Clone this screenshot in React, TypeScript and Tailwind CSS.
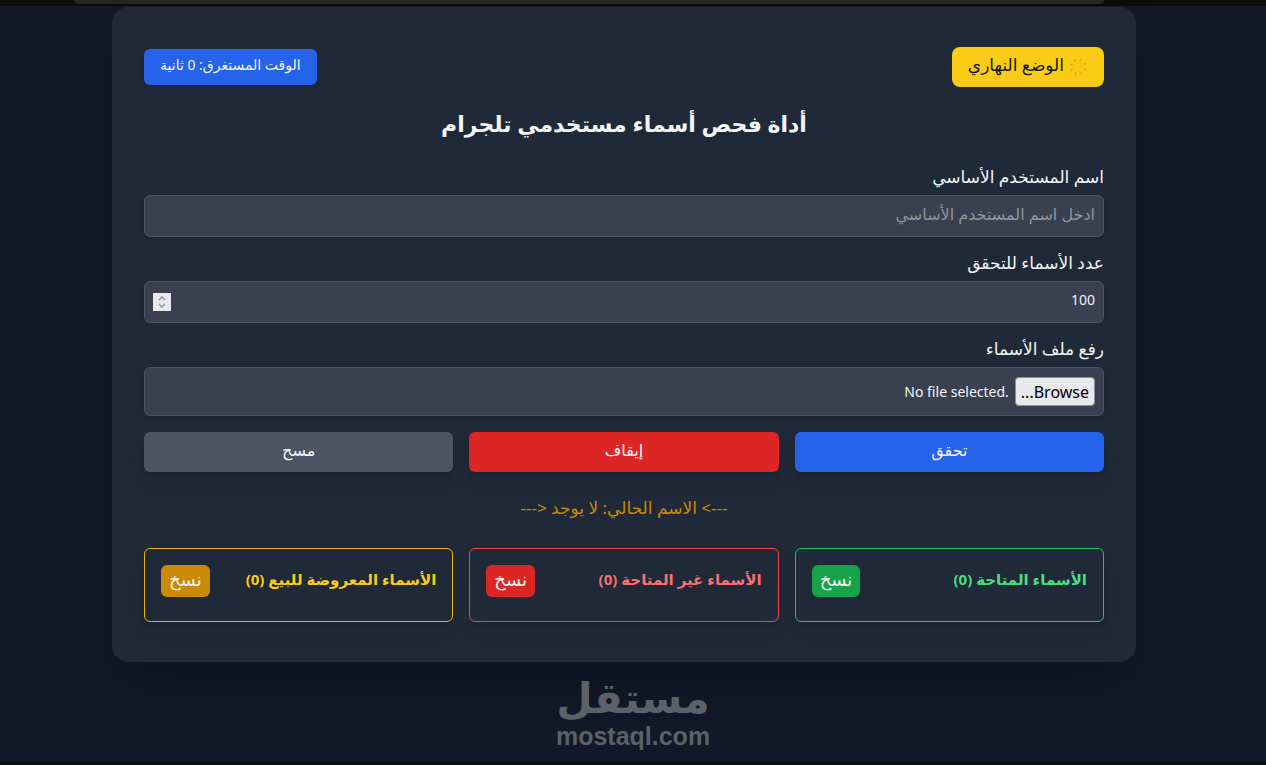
import { useState } from "react";

const resultLists = [
  {
    title: "الأسماء المتاحة",
    box: "border-[#22c55e]",
    heading: "text-[#4ade80]",
    button: "bg-[#16a34a]",
  },
  {
    title: "الأسماء غير المتاحة",
    box: "border-[#ef4444]",
    heading: "text-[#f87171]",
    button: "bg-[#dc2626]",
  },
  {
    title: "الأسماء المعروضة للبيع",
    box: "border-[#eab308]",
    heading: "text-[#facc15]",
    button: "bg-[#ca8a04]",
  },
];

const labelClass = "mb-2 block text-[17px] leading-5";
const fieldClass =
  "w-full rounded-md border border-[#4b5563] bg-[#394150] shadow-sm";

function SunIcon() {
  return (
    <svg viewBox="0 0 20 20" className="size-5" fill="none" stroke="#e3b010" strokeWidth="1.8" aria-hidden="true">
      <g transform="rotate(20 10 10)">
        <path d="M10 1.2v3.2M10 15.6v3.2M1.2 10h3.2M15.6 10h3.2M3.8 3.8L6 6M14 14l2.2 2.2M16.2 3.8L14 6M6 14l-2.2 2.2" />
        <circle cx="10" cy="10" r="3.8" strokeWidth="1" strokeDasharray="1 2" />
        <path d="M9.5 10h1" strokeWidth="1" />
      </g>
      <path d="M7 7.5l2-1" stroke="#f9c08a" strokeWidth="1" />
    </svg>
  );
}

function Chevron({ d }: { d: string }) {
  return (
    <svg viewBox="0 0 8 5" className="h-[5px] w-2" fill="none" stroke="#8b8f98" strokeWidth="1.3" aria-hidden="true">
      <path d={d} />
    </svg>
  );
}

export default function App() {
  const [username, setUsername] = useState("");
  const [count, setCount] = useState(100);
  const [fileName, setFileName] = useState("");

  return (
    <div
      dir="rtl"
      className="flex min-h-screen flex-col bg-[#111827] font-['Noto_Sans','DejaVu_Sans',sans-serif] text-[#f3f4f6]"
    >
      <div className="h-[7px] border-b border-[#1d1a18] bg-[#0c0c0c] pr-[162px] pl-[74px]">
        <div className="h-1 rounded-b-lg bg-[#262626]" />
      </div>

      <div className="flex-1 border-b-4 border-[#0c111c] pr-[18px]">
        <main className="mx-auto max-w-5xl rounded-2xl bg-[#1f2937] px-8 py-10 shadow-2xl">
          <div className="mb-4 flex items-center justify-between">
            <button type="button" className="flex h-10 items-center gap-1 rounded-lg bg-[#facc15] px-4 text-[#111827]">
              <SunIcon />
              <span className="pb-1 text-[17px] leading-6">الوضع النهاري</span>
            </button>
            <div className="flex h-9 items-center rounded-md bg-[#2563eb] px-4 pb-1 text-sm shadow-sm">
              الوقت المستغرق: 0 ثانية
            </div>
          </div>

          <h1 className="mb-6 text-center text-[22px] leading-10 font-bold">
            أداة فحص أسماء مستخدمي تلجرام
          </h1>

          <div className="mb-4">
            <label htmlFor="username" className={labelClass}>
              اسم المستخدم الأساسي
            </label>
            <input
              id="username"
              type="text"
              value={username}
              onChange={(e) => setUsername(e.target.value)}
              placeholder="ادخل اسم المستخدم الأساسي"
              className={`${fieldClass} block h-[42px] px-2 pb-1 text-base placeholder:text-[#8f949e]`}
            />
          </div>

          <div className="mb-4">
            <label htmlFor="count" className={labelClass}>
              عدد الأسماء للتحقق
            </label>
            <div className={`${fieldClass} flex h-[42px] items-center px-2`}>
              <input
                id="count"
                type="number"
                value={count}
                onChange={(e) => setCount(Number(e.target.value))}
                className="min-w-0 flex-1 [appearance:textfield] bg-transparent pb-1 text-sm outline-none [&::-webkit-inner-spin-button]:appearance-none"
              />
              <div className="flex size-[18px] flex-col items-center justify-center gap-0.5 bg-[#e9e9ed]">
                <button type="button" aria-label="زيادة" onClick={() => setCount(count + 1)}>
                  <Chevron d="M1 4l3-3 3 3" />
                </button>
                <button type="button" aria-label="إنقاص" onClick={() => setCount(count - 1)}>
                  <Chevron d="M1 1l3 3 3-3" />
                </button>
              </div>
            </div>
          </div>

          <div className="mb-4">
            <label htmlFor="names-file" className={labelClass}>
              رفع ملف الأسماء
            </label>
            <label htmlFor="names-file" className={`${fieldClass} relative flex h-[49px] items-center gap-1.5 px-2`}>
              <input
                id="names-file"
                type="file"
                className="sr-only"
                onChange={(e) => setFileName(e.target.files?.[0]?.name ?? "")}
              />
              <span className="flex h-[29px] items-center rounded border border-[#8f8f9d] bg-[#e9e9ed] px-[5px] text-base text-black">
                Browse...
              </span>
              <span dir="ltr" className="text-sm">{fileName || "No file selected."}</span>
            </label>
          </div>

          <div className="mb-6 grid grid-cols-3 gap-4 text-base">
            <button type="button" className="h-10 rounded-md bg-[#2563eb] pb-1 shadow-lg">تحقق</button>
            <button type="button" className="h-10 rounded-md bg-[#dc2626] pb-1 shadow-lg">إيقاف</button>
            <button type="button" className="h-10 rounded-md bg-[#4b5563] pb-1 shadow-lg">مسح</button>
          </div>

          <p className="mb-7 text-center text-[17px] leading-6 text-[#ca8a04]">
            ---&gt; الاسم الحالي: لا يوجد &lt;---
          </p>

          <div className="grid grid-cols-3 gap-4">
            {resultLists.map((list) => (
              <section key={list.title} className={`rounded-md border p-4 shadow-lg ${list.box}`}>
                <div className="mb-2 flex items-start justify-between">
                  <h2 className={`text-[15px] leading-7 font-bold ${list.heading}`}>{list.title} (0)</h2>
                  <button type="button" className={`h-8 rounded-md px-2 pb-1 text-lg leading-7 ${list.button}`}>
                    نسخ
                  </button>
                </div>
              </section>
            ))}
          </div>
        </main>

        <footer className="flex flex-col items-center pt-3 pl-[18px] font-bold text-[#5b6069]">
          <span className="font-['DejaVu_Sans',sans-serif] text-[42px] leading-[50px]">مستقل</span>
          <span dir="ltr" className="font-['Liberation_Sans',sans-serif] text-[25px] leading-6">mostaql.com</span>
        </footer>
      </div>
    </div>
  );
}
